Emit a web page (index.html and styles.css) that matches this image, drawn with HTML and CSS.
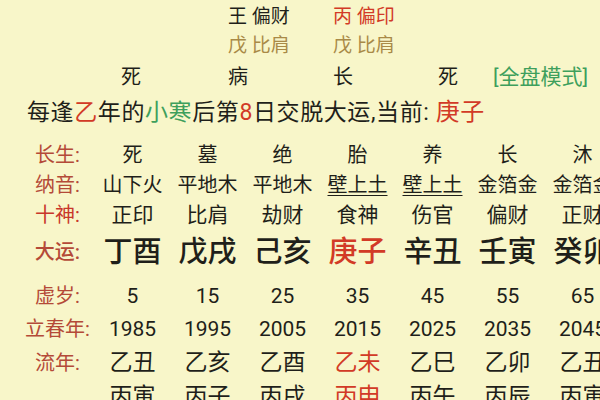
FILE: index.html
```html
<!DOCTYPE html>
<html lang="zh-CN">
<head>
<meta charset="utf-8">
<link rel="stylesheet" href="styles.css">
</head>
<body>
<div class="page">
  <div class="top">
    <div class="trow r1"><span></span><span>王 偏财</span><span class="red">丙 偏印</span></div>
    <div class="trow r2"><span></span><span class="olive">戊 比肩</span><span class="olive">戊 比肩</span></div>
    <div class="trow r3"><span>死</span><span>病</span><span>长</span><span>死</span><span class="green mode">[全盘模式]</span></div>
  </div>
  <div class="sentence">每逢<span class="red">乙</span>年的<span class="green">小寒</span>后第<span class="red">8</span>日交脱大运,当前: <span class="red big">庚子</span></div>
  <div class="table">
    <div class="row r-cs"><span class="lab">长生:</span><span>死</span><span>墓</span><span>绝</span><span>胎</span><span>养</span><span>长</span><span>沐</span></div>
    <div class="row r-ny"><span class="lab">纳音:</span><span>山下火</span><span>平地木</span><span>平地木</span><span class="ul">壁上土</span><span class="ul">壁上土</span><span>金箔金</span><span>金箔金</span></div>
    <div class="row r-ss"><span class="lab lab-red">十神:</span><span>正印</span><span>比肩</span><span>劫财</span><span>食神</span><span>伤官</span><span>偏财</span><span>正财</span></div>
    <div class="row r-dy"><span class="lab">大运:</span><span>丁酉</span><span>戊戌</span><span>己亥</span><span class="red">庚子</span><span>辛丑</span><span>壬寅</span><span>癸卯</span></div>
    <div class="row r-num"><span class="lab">虚岁:</span><span>5</span><span>15</span><span>25</span><span>35</span><span>45</span><span>55</span><span>65</span></div>
    <div class="row r-num r-year"><span class="lab">立春年:</span><span>1985</span><span>1995</span><span>2005</span><span>2015</span><span>2025</span><span>2035</span><span>2045</span></div>
    <div class="row r-ln"><span class="lab">流年:</span><span>乙丑</span><span>乙亥</span><span>乙酉</span><span class="red">乙未</span><span>乙巳</span><span>乙卯</span><span>乙丑</span></div>
    <div class="row r-ln"><span class="lab"></span><span>丙寅</span><span>丙子</span><span>丙戌</span><span class="red">丙申</span><span>丙午</span><span>丙辰</span><span>丙寅</span></div>
  </div>
</div>
</body>
</html>
```
FILE: styles.css
```css
html, body {
  margin: 0;
  padding: 0;
  overflow: hidden;
  background: #f8f6c9;
}
.page {
  width: 600px;
  height: 400px;
  overflow: hidden;
  font-family: Roboto, "Noto Sans CJK SC", sans-serif;
  color: #1f1f1a;
}
.red { color: #d23a26; }
.olive { color: #a98a47; }
.green { color: #3e9f5c; }

.top {
  padding-left: 121px;
  padding-top: 2px;
}
.trow {
  display: grid;
  grid-template-columns: 107px 105px 105px 55px auto;
  font-size: 19px;
  line-height: 29px;
  white-space: nowrap;
}
.trow.r3 {
  font-size: 20px;
  line-height: 32px;
  margin-top: 1px;
}
.mode { font-size: 21px; }

.sentence {
  padding-left: 27px;
  margin-top: 3px;
  font-size: 23px;
  letter-spacing: 0.6px;
  line-height: 32px;
  white-space: nowrap;
}
.sentence .big { font-size: 24px; }

.table {
  margin-top: 11px;
  padding-left: 20px;
}
.row {
  display: grid;
  grid-template-columns: repeat(8, 75px);
  width: 600px;
  white-space: nowrap;
  font-size: 20px;
  line-height: 30px;
}
.row > span {
  text-align: center;
}
.row > .lab {
  color: #b44a38;
  font-size: 20px;
}
.row > .lab-red { color: #c8372a; }
.r-ss { font-size: 21px; }
.r-dy {
  font-size: 29px;
  font-weight: 500;
  line-height: 44px;
  margin-bottom: 6px;
}
.r-num {
  font-size: 21px;
  line-height: 33px;
}
.r-ln {
  font-size: 23px;
  line-height: 34px;
}
.ul {
  text-decoration: underline;
  text-decoration-thickness: 1px;
  text-underline-offset: 3px;
}
```
